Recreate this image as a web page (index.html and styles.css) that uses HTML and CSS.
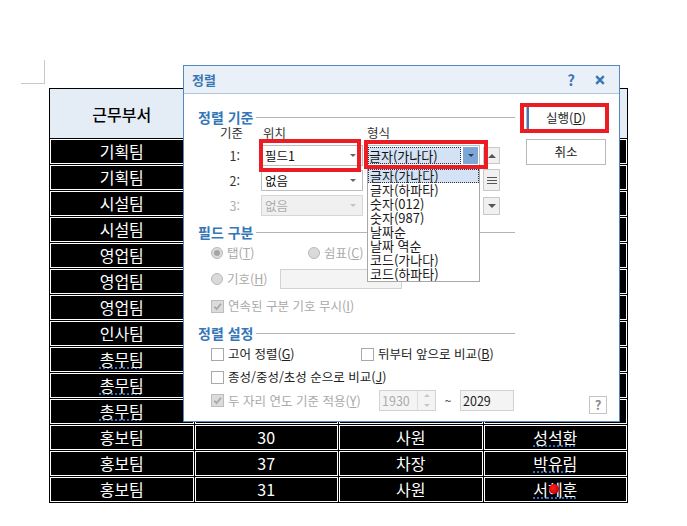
FILE: index.html
```html
<!DOCTYPE html>
<html lang="ko">
<head>
    <meta charset="UTF-8">
    <title>정렬</title>
    <link rel="stylesheet" href="styles.css">
</head>
<body>
<div class="sheet">
    <div class="corner"></div>

    <table class="grid">
        <tr><th>근무부서</th><th>나이</th><th>직급</th><th>이름</th></tr>
        <tr><td>기획팀</td><td>28</td><td>사원</td><td>김지훈</td></tr>
        <tr><td>기획팀</td><td>45</td><td>부장</td><td>이정민</td></tr>
        <tr><td>시설팀</td><td>33</td><td>대리</td><td>박상우</td></tr>
        <tr><td>시설팀</td><td>41</td><td>과장</td><td>최은영</td></tr>
        <tr><td>영업팀</td><td>29</td><td>사원</td><td>정다은</td></tr>
        <tr><td>영업팀</td><td>38</td><td>과장</td><td>한승철</td></tr>
        <tr><td>영업팀</td><td>52</td><td>부장</td><td>윤재호</td></tr>
        <tr><td>인사팀</td><td>35</td><td>대리</td><td>오세진</td></tr>
        <tr><td><span class="spell">총무팀</span></td><td>31</td><td>사원</td><td>강민지</td></tr>
        <tr><td><span class="spell">총무팀</span></td><td>44</td><td>차장</td><td>임현수</td></tr>
        <tr><td><span class="spell">총무팀</span></td><td>26</td><td>사원</td><td>송하늘</td></tr>
        <tr><td>홍보팀</td><td>30</td><td>사원</td><td><span class="spell">성석환</span></td></tr>
        <tr><td>홍보팀</td><td>37</td><td>차장</td><td><span class="spell">박유림</span></td></tr>
        <tr><td>홍보팀</td><td>31</td><td>사원</td><td><span class="spell">서<span class="dot">혜</span>훈</span></td></tr>
    </table>

    <div class="dialog">
        <div class="titlebar">
            <span class="title">정렬</span>
            <span class="tb-help">?</span>
            <svg class="tb-close" viewBox="0 0 10 10"><path d="M1.2 1.2L8.8 8.8M8.8 1.2L1.2 8.8" stroke="#3a76b5" stroke-width="2.4"/></svg>
        </div>

        <div class="dlg-body">
            <div class="form">
                <div class="sec-title"><span>정렬 기준</span><i></i></div>
                <div class="sort-grid">
                    <div class="lbl-key">기준</div>
                    <div class="lbl-pos">위치</div>
                    <div class="lbl-fmt">형식</div>
                    <div class="movers">
                        <div class="mv mv-up"><i></i></div>
                        <div class="mv mv-mid"><b></b><b></b><b></b></div>
                        <div class="mv mv-down"><i></i></div>
                    </div>

                    <div class="num">1:</div>
                    <div class="select">필드1<i class="arr"></i></div>
                    <div class="combo"><span class="focus">글자(가나다)</span><span class="combo-btn"><i></i></span></div>

                    <div class="num">2:</div>
                    <div class="select">없음<i class="arr"></i></div>
                    <div class="blank"></div>

                    <div class="num off">3:</div>
                    <div class="select off">없음<i class="arr"></i></div>
                    <div class="blank"></div>
                </div>

                <div class="sec-title sec-2"><span>필드 구분</span><i></i></div>
                <div class="opt-row row-a">
                    <label class="radio off w-tab"><i class="on"></i><span>탭(<u>T</u>)</span></label>
                    <label class="radio off"><i></i><span>쉼표(<u>C</u>)</span></label>
                </div>
                <div class="opt-row row-b">
                    <label class="radio off w-sym"><i></i><span>기호(<u>H</u>)</span></label>
                    <span class="field off sym-field"></span>
                </div>
                <div class="opt-row row-c">
                    <label class="check off"><i><svg viewBox="0 0 12 12"><path d="M2.5 6.2L5 8.8L9.8 3" fill="none" stroke="#a9a9a9" stroke-width="2"/></svg></i><span>연속된 구분 기호 무시(<u>I</u>)</span></label>
                </div>

                <div class="sec-title sec-3"><span>정렬 설정</span><i></i></div>
                <div class="opt-row row-d">
                    <label class="check w-old"><i></i><span>고어 정렬(<u>G</u>)</span></label>
                    <label class="check"><i></i><span>뒤부터 앞으로 비교(<u>B</u>)</span></label>
                </div>
                <div class="opt-row row-e">
                    <label class="check"><i></i><span>종성/중성/초성 순으로 비교(<u>J</u>)</span></label>
                </div>
                <div class="opt-row row-f">
                    <label class="check off w-year"><i><svg viewBox="0 0 12 12"><path d="M2.5 6.2L5 8.8L9.8 3" fill="none" stroke="#a9a9a9" stroke-width="2"/></svg></i><span>두 자리 연도 기준 적용(<u>Y</u>)</span></label>
                    <span class="field off spin">1930<span class="spin-btns"><i class="up"></i><i class="down"></i></span></span>
                    <span class="tilde">~</span>
                    <span class="field year-end">2029</span>
                </div>
            </div>

            <div class="actions">
                <div class="btn btn-run">실행(<u>D</u>)</div>
                <div class="btn">취소</div>
                <div class="help-btn">?</div>
            </div>
        </div>

        <ul class="droplist">
            <li class="cur">글자(가나다)</li>
            <li>글자(하파타)</li>
            <li>숫자(012)</li>
            <li>숫자(987)</li>
            <li>날짜순</li>
            <li>날짜 역순</li>
            <li>코드(가나다)</li>
            <li>코드(하파타)</li>
        </ul>

        <div class="mark mark-pos"></div>
        <div class="mark mark-fmt"></div>
        <div class="mark mark-run"></div>
    </div>
</div>
</body>
</html>
```

FILE: styles.css
```css
body {
    margin: 0;
    background: #fff;
    font-family: "Noto Sans CJK KR", "Noto Sans", sans-serif;
}

.sheet {
    position: relative;
    height: 526px;
    padding-top: 60px;
    box-sizing: border-box;
    overflow: hidden;
}

.corner {
    width: 24px;
    height: 24px;
    margin-left: 21px;
    box-sizing: border-box;
    border-right: 1px solid #c8c8c8;
    border-bottom: 1px solid #c8c8c8;
}

/* 표 */
.grid {
    margin: 4px 0 0 49px;
    width: 579px;
    table-layout: fixed;
    border-collapse: separate;
    border-spacing: 1px;
    background: #000;
}

.grid th {
    height: 47px;
    padding: 0;
    background: #e4ecf6;
    border: 1px solid #e4ecf6;
    color: #000;
    font-size: 16px;
    font-weight: 500;
}

.grid td {
    height: 23px;
    padding: 0;
    background: #000;
    border: 1px solid #fff;
    color: #fff;
    font-size: 16px;
    line-height: 23px;
    text-align: center;
}

.spell {
    text-decoration: underline dotted #3b86e6;
    text-underline-offset: 2px;
}

.dot {
    position: relative;
}

.dot::after {
    content: '';
    position: absolute;
    left: 1px;
    top: 7px;
    width: 10px;
    height: 10px;
    border-radius: 50%;
    background: radial-gradient(circle at 40% 40%, #ff2020 0%, #d00000 70%, #900000 100%);
}

/* 대화상자 */
.dialog {
    position: absolute;
    left: 183px;
    top: 65px;
    width: 437px;
    height: 357px;
    box-sizing: border-box;
    border: 1px solid #5588be;
    background: #fff;
    display: flex;
    flex-direction: column;
    font-size: 12.5px;
    color: #222;
}

.titlebar {
    flex: none;
    height: 27px;
    display: flex;
    align-items: center;
    padding-left: 8px;
    background: #e9f0f8;
    border-bottom: 1px solid #aec5dd;
}

.title {
    flex: 1;
    color: #3a76b5;
    font-size: 13px;
    font-weight: bold;
}

.tb-help {
    color: #3a76b5;
    font-size: 15px;
    font-weight: bold;
    margin-right: 20px;
}

.tb-close {
    width: 10px;
    height: 10px;
    margin-right: 14px;
}

.dlg-body {
    flex: 1;
    display: flex;
    padding-left: 14px;
}

.form {
    width: 317px;
    padding-top: 15px;
}

.sec-title {
    display: flex;
    align-items: center;
    height: 16px;
    color: #3577b8;
    font-size: 14px;
    font-weight: bold;
}

.sec-title i {
    flex: 1;
    margin-left: 3px;
    border-top: 1px solid #b4b4b4;
}

.sec-2 { margin-top: 8px; }
.sec-3 { margin-top: 11px; }

.sort-grid {
    display: grid;
    grid-template-columns: 63px 105px 117px 17px;
    grid-template-rows: 16px 21px 21px 21px;
    row-gap: 4px;
    line-height: 16px;
}

.lbl-key {
    grid-column: 1;
    text-align: right;
    padding-right: 18px;
    color: #333;
}

.lbl-pos { grid-column: 2; padding-left: 2px; color: #333; }
.lbl-fmt { grid-column: 3; padding-left: 1px; color: #333; }

.num {
    grid-column: 1;
    text-align: right;
    padding-right: 21px;
    line-height: 21px;
    color: #333;
}

.num.off { color: #b0b0b0; }

.select {
    grid-column: 2;
    position: relative;
    width: 102px;
    box-sizing: border-box;
    border: 1px solid #bdbdbd;
    padding-left: 3px;
    line-height: 19px;
    color: #111;
}

.select.off {
    background: #f0f0f0;
    border-color: #d6d6d6;
    color: #acacac;
}

.blank { grid-column: 3; }

.arr {
    position: absolute;
    right: 6px;
    top: 8px;
    border-left: 3px solid transparent;
    border-right: 3px solid transparent;
    border-top: 3px solid #666;
}

.select.off .arr { border-top-color: #c4c4c4; }

.combo {
    grid-column: 3;
    width: 114px;
    box-sizing: border-box;
    border: 1px solid #c0c0c0;
    display: flex;
    padding: 1px;
    background: #fff;
}

.combo .focus {
    flex: 1;
    background: #d3e3f5;
    outline: 1px dotted #333;
    outline-offset: -1px;
    padding-left: 1px;
    line-height: 17px;
    color: #111;
    font-size: 13px;
}

.combo-btn {
    width: 15px;
    margin-left: 2px;
    background: #7ca8d8;
    display: flex;
    align-items: center;
    justify-content: center;
}

.combo-btn i {
    border-left: 3px solid transparent;
    border-right: 3px solid transparent;
    border-top: 3px solid #2a3a50;
}

.movers {
    grid-column: 4;
    grid-row: 2 / 5;
    display: flex;
    flex-direction: column;
}

.mv {
    box-sizing: border-box;
    width: 17px;
    border: 1px solid #c9c9c9;
    background: #f0f0f0;
    display: flex;
    flex-direction: column;
    align-items: center;
    justify-content: center;
}

.mv-up { height: 17px; margin-top: 2px; }
.mv-mid { height: 22px; margin-top: 5px; gap: 2px; }
.mv-down { height: 18px; margin-top: 6px; }

.mv-up i {
    border-left: 4px solid transparent;
    border-right: 4px solid transparent;
    border-bottom: 4px solid #555;
}

.mv-down i {
    border-left: 4px solid transparent;
    border-right: 4px solid transparent;
    border-top: 4px solid #555;
}

.mv-mid b {
    width: 10px;
    height: 1px;
    background: #555;
}

/* 옵션 */
.opt-row {
    display: flex;
    align-items: center;
    padding-left: 13px;
    line-height: 16px;
}

.row-a { margin-top: 5px; height: 16px; }
.row-b { margin-top: 8px; height: 20px; }
.row-c { margin-top: 9px; height: 16px; }
.row-d { margin-top: 5px; height: 16px; }
.row-e { margin-top: 7px; height: 16px; }
.row-f { margin-top: 5px; height: 21px; }

.radio, .check {
    display: flex;
    align-items: center;
    gap: 4px;
    color: #222;
    white-space: nowrap;
}

.radio.off, .check.off { color: #a9a9a9; }

.radio i {
    flex: none;
    width: 12px;
    height: 12px;
    box-sizing: border-box;
    border-radius: 50%;
    border: 1px solid #b9b9b9;
    background: #dadada;
    display: flex;
    align-items: center;
    justify-content: center;
}

.radio i.on::after {
    content: '';
    width: 6px;
    height: 6px;
    border-radius: 50%;
    background: #a5a5a5;
}

.check i {
    flex: none;
    width: 13px;
    height: 13px;
    box-sizing: border-box;
    border: 1px solid #a9a9a9;
    background: #fff;
}

.check.off i {
    background: #dcdcdc;
    border-color: #bdbdbd;
}

.check i svg {
    display: block;
    width: 11px;
    height: 11px;
}

.w-tab { width: 97px; }
.w-sym { width: 69px; }
.w-old { width: 150px; }
.w-year { width: 168px; }

.field {
    box-sizing: border-box;
    height: 21px;
    border: 1px solid #d2d2d2;
    background: #f4f4f4;
    line-height: 19px;
    padding-left: 2px;
}

.field.off { color: #acacac; }

.sym-field { width: 122px; height: 20px; }

.spin {
    width: 57px;
    display: flex;
    color: #b0b0b0;
}

.spin-btns {
    margin-left: auto;
    width: 17px;
    border-left: 1px solid #dcdcdc;
    display: flex;
    flex-direction: column;
    align-items: center;
    justify-content: space-around;
}

.spin-btns .up {
    border-left: 3px solid transparent;
    border-right: 3px solid transparent;
    border-bottom: 3px solid #c8c8c8;
}

.spin-btns .down {
    border-left: 3px solid transparent;
    border-right: 3px solid transparent;
    border-top: 3px solid #c8c8c8;
}

.tilde {
    width: 24px;
    text-align: center;
    color: #444;
}

.year-end {
    width: 54px;
    color: #222;
}

/* 버튼 */
.actions {
    width: 81px;
    margin-left: 11px;
    padding: 11px 0 7px;
    display: flex;
    flex-direction: column;
}

.btn {
    width: 80px;
    height: 26px;
    box-sizing: border-box;
    border: 1px solid #b9b9b9;
    background: #fff;
    text-align: center;
    line-height: 24px;
    color: #222;
}

.btn + .btn { margin-top: 8px; }

.btn-run {
    box-shadow: inset 2px 0 0 #3d7cc4;
}

.help-btn {
    margin-top: auto;
    align-self: flex-end;
    width: 18px;
    height: 18px;
    box-sizing: border-box;
    border: 1px solid #c4c4c4;
    text-align: center;
    line-height: 16px;
    font-size: 13px;
    font-weight: bold;
    color: #8a8a8a;
}

/* 펼쳐진 목록 */
.droplist {
    position: absolute;
    left: 183px;
    top: 102px;
    width: 113px;
    margin: 0;
    padding: 0;
    list-style: none;
    box-sizing: border-box;
    border: 1px solid #a8a8a8;
    background: #fff;
    font-size: 13px;
    color: #1a1a1a;
}

.droplist li {
    height: 14px;
    line-height: 14px;
    padding-left: 2px;
    white-space: nowrap;
}

.droplist li.cur {
    background: #d3e3f5;
    outline: 1px dotted #333;
    outline-offset: -1px;
}

/* 빨간 표시 */
.mark {
    position: absolute;
    box-sizing: border-box;
    border: 4px solid #ec1c24;
}

.mark-pos { left: 75px; top: 73px; width: 102px; height: 33px; }
.mark-fmt { left: 180px; top: 74px; width: 124px; height: 29px; }
.mark-run { left: 336px; top: 37px; width: 89px; height: 30px; }
```
